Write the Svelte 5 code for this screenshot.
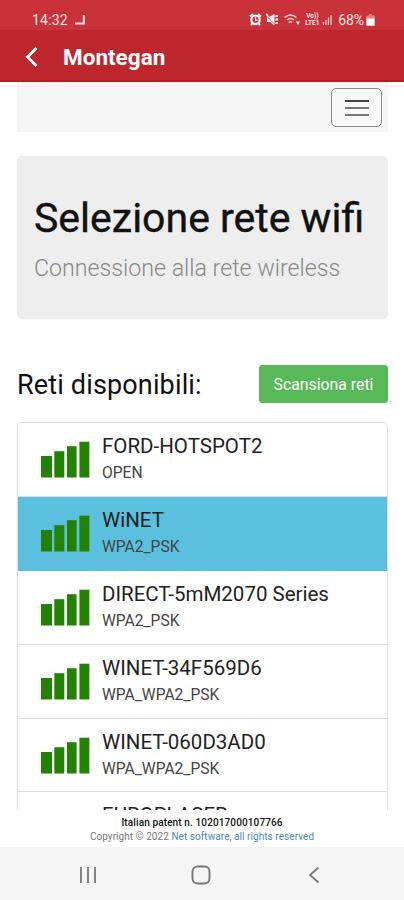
<script>
  let menuOpen = false;
  let selected = "WiNET";
  const networks = [
    { ssid: "FORD-HOTSPOT2", security: "OPEN" },
    { ssid: "WiNET", security: "WPA2_PSK" },
    { ssid: "DIRECT-5mM2070 Series", security: "WPA2_PSK" },
    { ssid: "WINET-34F569D6", security: "WPA_WPA2_PSK" },
    { ssid: "WINET-060D3AD0", security: "WPA_WPA2_PSK" },
    { ssid: "EUROPLASER", security: "" },
  ];
</script>

<div class="screen">
  <!-- Phone status bar -->
  <div class="status-bar">
    <span class="clock">14:32</span>
    <svg class="note" width="11" height="12" viewBox="0 0 11 12">
      <path d="M0 9.500h8.800V1" fill="none" stroke="#fbe3e4" stroke-width="2" />
    </svg>
    <div class="status-icons">
      <svg width="13" height="13" viewBox="0 0 13 13">
        <path d="M1 3.500L4 1M12 3.500L9 1M2 12l2-2M11 12L9 10" stroke="#fff" stroke-width="2" />
        <circle cx="6.500" cy="6.700" r="4.200" fill="none" stroke="#fff" stroke-width="2.200" />
        <path d="M6.500 4.300v2.800h2" fill="none" stroke="#fff" stroke-width="1.200" />
      </svg>
      <svg class="mute" width="13" height="13" viewBox="0 0 13 13">
        <path d="M1 3.500h3L8.500 1v11.500L4 9H1z" fill="#fff" />
        <path d="M0 2.500l9 9" stroke="#c93239" stroke-width="0.800" />
        <path d="M0 1l2 2M9.500 3h2.500M9.500 6.500h2.500M9.500 10h2.500" stroke="#fff" stroke-width="1.800" />
      </svg>
      <svg class="wifi" width="16" height="13" viewBox="0 0 16 13">
        <path d="M.5 4.500q6-5 12 0M3 7q3.500-3 7 0M5 9.500q1.500-1.500 3 0" fill="none" stroke="#f9d6d8" stroke-width="1.600" />
        <path d="M12 8.500h4l-2 3.500z" fill="#fff" />
      </svg>
      <span class="volte"><span>Vo))</span><span>LTE1</span></span>
      <svg class="bars" width="10" height="11" viewBox="0 0 10 11">
        <path d="M1.500 11V8M4 11V6M6.500 11V3.500M9 11V1" stroke="#f5c4c7" stroke-width="1.300" />
      </svg>
      <span class="percent">68%</span>
      <svg class="battery" width="9" height="12" viewBox="0 0 9 12">
        <path d="M3 0h3v1.500h2a1 1 0 0 1 1 1V11a1 1 0 0 1-1 1H1a1 1 0 0 1-1-1V2.500a1 1 0 0 1 1-1h2z" fill="#dc8388" />
        <path d="M.5 4.500h8V11a.5.500 0 0 1-.5.500H1a.5.500 0 0 1-.5-.5z" fill="#fff" />
      </svg>
    </div>
  </div>

  <header>
    <svg width="14" height="22" viewBox="0 0 14 22">
      <path d="M11.500 2L2.500 11l9 9" fill="none" stroke="#fff" stroke-width="3" />
    </svg>
    <span class="app-title">Montegan</span>
  </header>

  <main>
    <nav>
      <button class="menu-button" aria-label="Menu" on:click={() => (menuOpen = !menuOpen)}>
        <span></span>
        <span></span>
        <span></span>
      </button>
    </nav>

    <div class="jumbotron">
      <h1>Selezione rete wifi</h1>
      <p>Connessione alla rete wireless</p>
    </div>

    <div class="list-header">
      <h2>Reti disponibili:</h2>
      <button class="scan-button">Scansiona reti</button>
    </div>

    <div class="networks">
      {#each networks as network}
        <button
          class="network"
          class:active={network.ssid === selected}
          on:click={() => (selected = network.ssid)}
        >
          <svg width="50" height="37" viewBox="0 0 50 37">
            <g fill="#238204">
              <rect x="1" y="15" width="11" height="21.500" />
              <rect x="14.300" y="10.200" width="10" height="26.300" />
              <rect x="27" y="5.200" width="9.600" height="31.300" />
              <rect x="39.400" y="0.700" width="10" height="35.800" />
            </g>
          </svg>
          <span class="network-info">
            <span class="ssid">{network.ssid}</span>
            <span class="security">{network.security}</span>
          </span>
        </button>
      {/each}
    </div>
  </main>

  <footer>
    <div class="patent">Italian patent n. 102017000107766</div>
    <div class="copyright">Copyright © 2022 <span class="link">Net software, all rights reserved</span></div>
  </footer>

  <!-- Android navigation keys -->
  <div class="nav-keys">
    <svg width="18" height="18" viewBox="0 0 18 18">
      <path d="M2 1v16M9 1v16M16 1v16" stroke="#777" stroke-width="1.800" />
    </svg>
    <svg width="20" height="20" viewBox="0 0 20 20">
      <rect x="1.500" y="1.500" width="17" height="17" rx="5" fill="none" stroke="#777" stroke-width="1.900" />
    </svg>
    <svg width="18" height="18" viewBox="0 0 18 18">
      <path d="M13.500 1.500L5 9l8.500 7.500" fill="none" stroke="#777" stroke-width="1.800" />
    </svg>
  </div>
</div>

<style>
  :global(body) {
    margin: 0;
    background: #fff;
  }

  .screen {
    display: flex;
    flex-direction: column;
    height: 900px;
    overflow: hidden;
    font-family: Roboto, "Liberation Sans", sans-serif;
    color: #111;
  }

  button {
    font-family: inherit;
    cursor: pointer;
  }

  .status-bar {
    display: flex;
    align-items: center;
    flex: none;
    height: 30px;
    box-sizing: border-box;
    padding: 9px 29px 0 32px;
    background: #c93239;
    color: #fbe6e7;
    font-size: 14px;
  }

  .clock {
    letter-spacing: 0.2px;
  }

  .note {
    margin-left: 7px;
  }

  .status-icons {
    display: flex;
    align-items: center;
    margin-left: auto;
  }

  .mute {
    margin-left: 4px;
  }

  .wifi {
    margin-left: 5px;
  }

  .volte {
    display: flex;
    flex-direction: column;
    margin-left: 3px;
    width: 18px;
    font-size: 6.5px;
    font-weight: 700;
    line-height: 7px;
    text-align: center;
  }

  .bars {
    margin-left: 1px;
  }

  .percent {
    margin-left: 6px;
    letter-spacing: -0.1px;
  }

  .battery {
    margin-left: 2px;
  }

  header {
    display: flex;
    align-items: center;
    flex: none;
    height: 52px;
    box-sizing: border-box;
    padding: 3px 0 0 25px;
    background: #be262e;
    border-bottom: 2px solid #b51c20;
  }

  .app-title {
    margin-left: 24px;
    color: #fff;
    font-size: 22.5px;
    font-weight: 700;
  }

  main {
    flex: none;
    height: 728px;
    overflow: hidden;
    padding: 0 16px 0 17px;
  }

  nav {
    display: flex;
    align-items: flex-start;
    justify-content: flex-end;
    height: 50px;
    box-sizing: border-box;
    padding: 6px 6px 0 0;
    background: #f6f6f6;
  }

  .menu-button {
    display: flex;
    flex-direction: column;
    align-items: center;
    justify-content: center;
    gap: 5px;
    width: 51px;
    height: 39px;
    padding: 0;
    background: #f8f8f8;
    border: 1px solid #888;
    border-radius: 5px;
  }

  .menu-button span {
    width: 24px;
    height: 2px;
    background: #777;
  }

  .menu-button span:first-child {
    background: #444;
  }

  .jumbotron {
    height: 163px;
    box-sizing: border-box;
    margin-top: 24px;
    padding: 36px 17px 0;
    background: #eee;
    border-radius: 5px;
  }

  h1 {
    margin: 0;
    color: #111;
    font-size: 41px;
    font-weight: 400;
    line-height: 52px;
    white-space: nowrap;
    -webkit-text-stroke: 0.4px #111;
  }

  .jumbotron p {
    margin: 8px 0 0;
    color: #888;
    font-size: 23.2px;
    font-weight: 300;
    line-height: 32px;
    white-space: nowrap;
  }

  .list-header {
    display: flex;
    align-items: center;
    justify-content: space-between;
    height: 38px;
    margin-top: 46px;
  }

  h2 {
    margin: 2px 0 0;
    font-size: 27px;
    font-weight: 400;
    letter-spacing: 0.15px;
  }

  .scan-button {
    width: 129px;
    height: 38px;
    padding: 0;
    background: #57b957;
    border: 1px solid #57b957;
    border-radius: 3px;
    color: #fff;
    font-size: 15.8px;
  }

  .networks {
    margin-top: 19px;
    border: 1px solid #e0e0e0;
    border-radius: 5px 5px 0 0;
    overflow: hidden;
  }

  .network {
    display: flex;
    width: 100%;
    height: 73.9px;
    box-sizing: border-box;
    padding: 18px 0 0 22px;
    background: #fff;
    border: none;
    border-bottom: 1px solid #ddd;
    text-align: left;
  }

  .network.active {
    background: #5bc0de;
    border-color: #5bc0de;
  }

  .network-info {
    display: flex;
    flex-direction: column;
    margin: -7px 0 0 12px;
    white-space: nowrap;
  }

  .ssid {
    color: #222;
    font-size: 20.5px;
    line-height: 24px;
  }

  .security {
    margin-top: 6px;
    color: #444;
    font-size: 15.6px;
    line-height: 18px;
  }

  footer {
    flex: none;
    height: 37px;
    box-sizing: border-box;
    padding-top: 6px;
    text-align: center;
    font-size: 10px;
    line-height: 14px;
  }

  .patent {
    font-weight: 500;
    letter-spacing: 0.12px;
  }

  .copyright {
    color: #777;
    letter-spacing: 0.06px;
  }

  .link {
    color: #4b88bd;
  }

  .nav-keys {
    display: flex;
    align-items: center;
    flex: 1;
    padding: 2px 81px 0 79px;
    justify-content: space-between;
    background: #f5f5f5;
  }
</style>
